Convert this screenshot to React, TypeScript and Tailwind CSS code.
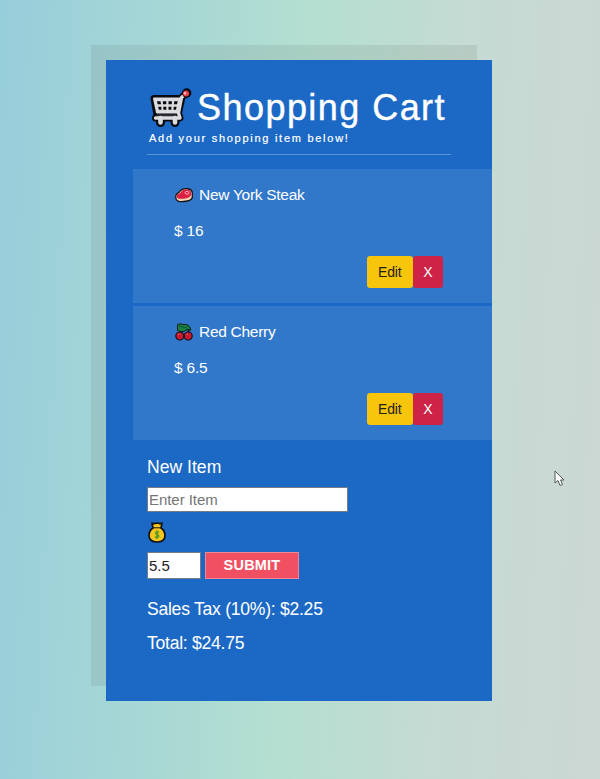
import React from "react";

function CartIcon() {
  return (
    <svg viewBox="0 0 42 40" className="h-10 w-[42px] shrink-0" strokeLinecap="round" strokeLinejoin="round" fill="none">
      <path d="M37 5L32 9L28.500 25L30 30H5.500M4 10.500H31.500L28 27H7Z" fill="#080b10" stroke="#080b10" strokeWidth="7" />
      <path d="M10.500 31V34.500M25 31V34.500" stroke="#080b10" strokeWidth="9" />
      <path d="M36 5.500L31.500 9.500L28.500 25L30 30H5.500" stroke="#dcdcdf" strokeWidth="3.400" />
      <path d="M4 10.500H31L28 24.500H7Z" fill="#dcdcdf" stroke="#dcdcdf" strokeWidth="2" />
      <path d="M7 13.300H10.500L11 16.300H7.700ZM12.800 13.300H16.300V16.300H13ZM18.500 13.300H22L21.700 16.300H18.500ZM24.200 13.300H27.700L27 16.300H24ZM8.200 18.800H11.200L11.500 21.800H8.800ZM13.200 18.800H16.300V21.800H13.500ZM18.500 18.800H21.500L21.300 21.800H18.500ZM23.800 18.800H26.600L26 21.800H23.400Z" fill="#080b10" />
      <path d="M7 27.200H26" stroke="#3a3c42" strokeWidth="1.200" />
      <path d="M10.500 30V34.500M25 30V34.500" stroke="#dcdcdf" strokeWidth="4.600" />
      <circle cx="36.700" cy="5" r="4.700" fill="#080b10" />
      <circle cx="36" cy="5.500" r="3" fill="#ee3f4f" />
      <circle cx="35" cy="5.300" r="1.200" fill="#ffc0c2" />
    </svg>
  );
}

function SteakIcon() {
  return (
    <svg viewBox="0 0 18 16" className="h-4 w-[18px]">
      <path d="M.8 9C.8 6 4 6.500 5.500 3.500C8 1 17.300 .5 17.300 6V10.500C16.500 14 12 14.300 9 14.500C4 15 .8 14 .8 11Z" fill="#efd2b4" stroke="#17121a" strokeWidth="1.300" />
      <path d="M1.700 9C2.500 6.700 5.500 7 6.800 4C9 2 16.300 1.500 16.300 6.500C16 11 11 11.500 7 11.800C4 12 1.500 11.500 1.700 9Z" fill="#db2143" />
      <ellipse cx="12" cy="5.800" rx="2" ry="1.400" fill="#db2143" stroke="#f6a8b4" strokeWidth="1" />
    </svg>
  );
}

function CherryIcon() {
  return (
    <svg viewBox="0 0 18 18" className="h-[18px] w-[18px]">
      <path d="M13 4C14 7 14 9 13 11M11 5C8 7 6 8 5 11" fill="none" stroke="#102019" strokeWidth="2" />
      <path d="M2.500 1.500L5 .8L8 1.500L11 1.500C14 2 15 4 16 7L12 6.500L9 8.500H5L2.500 7.500Z" fill="#188044" stroke="#102019" />
      <path d="M4 3L12 5" stroke="#0e5932" />
      <circle cx="4.800" cy="13" r="4" fill="#c9172f" stroke="#17121a" strokeWidth="1.200" />
      <circle cx="13.200" cy="13" r="4" fill="#c9172f" stroke="#17121a" strokeWidth="1.200" />
      <path d="M3 11.700L4.500 11M11.500 11.700L13 11" stroke="#f16b74" />
    </svg>
  );
}

function MoneyBagIcon() {
  return (
    <svg viewBox="0 0 18 21" className="h-[21px] w-[18px]">
      <path d="M4 1L6 1.700L9 1L12 1.700L14 1L13 6C16 8 17 10 17 13.500C17 17.500 14 20 9 20C4 20 1 17.500 1 13.500C1 10 2 8 5 6Z" fill="#f6c51b" stroke="#10131a" strokeWidth="1.700" strokeLinejoin="round" />
      <path d="M5 5.800H13" stroke="#10131a" />
      <path d="M11 10.500C8 9 6.500 11.500 9 12.500C12.500 13.500 10 16.500 7 15M9 8.500V17" fill="none" stroke="#5b9d26" strokeWidth="1.700" />
    </svg>
  );
}

const items = [
  { name: "New York Steak", price: "16", icon: <SteakIcon /> },
  { name: "Red Cherry", price: "6.5", icon: <CherryIcon /> },
];

export default function App() {
  return (
    <div className="relative h-[779px] w-[600px] overflow-hidden bg-[linear-gradient(93deg,#97cedb_0%,#b4dfd1_49%,#c5dbd3_73%,#ccd8d3_100%)] pt-[60px] pl-[106px] font-['Liberation_Sans',Arial,sans-serif] text-white">
      <main className="h-[641px] w-[386px] bg-[#1c69c5] shadow-[-15px_-15px_0_rgba(95,100,95,0.13)]">
        <header className="ml-[41px] h-[95px] w-[304px] border-b border-[#5b96d7] pt-7">
          <h1 className="flex h-10 items-center pl-[3px] text-[36px] leading-10 tracking-[1.450px] whitespace-nowrap [-webkit-text-stroke:0.4px_white]">
            <CartIcon />
            <span className="ml-[5px]">Shopping Cart</span>
          </h1>
          <p className="ml-0.5 text-[11px] leading-5 tracking-[1.730px] [-webkit-text-stroke:0.2px_white]">Add your shopping item below!</p>
        </header>

        <ul className="mt-3.5 ml-[27px] flex flex-col gap-[3px]">
          {items.map((item) => (
            <li key={item.name} className="h-[134px] bg-[#3177ca] pt-4 pl-[41px] text-[15.500px] leading-5 tracking-[-0.280px]">
              <div className="flex h-5 items-center">
                <span className="ml-px w-6">{item.icon}</span>
                <span>{item.name}</span>
              </div>
              <p className="mt-4 tracking-[-0.200px]">$ {item.price}</p>
              <div className="mt-[15px] ml-[193px] flex text-sm tracking-[-0.150px]">
                <button className="h-8 w-[45.500px] rounded-[3px] bg-[#f7c60c] text-[#252015]">Edit</button>
                <button className="h-8 w-[30.500px] rounded-[3px] bg-[#cd2346]">X</button>
              </div>
            </li>
          ))}
        </ul>

        <form className="mt-[15px] ml-[41px]" onSubmit={(e) => e.preventDefault()}>
          <label htmlFor="item" className="block h-6 text-[17.600px] leading-6">New Item</label>
          <input id="item" placeholder="Enter Item" className="mt-2 block h-[25px] w-[201px] border border-[#747d86] bg-white px-px text-[15px] tracking-[-0.050px] text-[#222] placeholder:text-[#757575]" />
          <div className="mt-2.5 ml-px h-[21px]"><MoneyBagIcon /></div>
          <div className="mt-[9px] flex gap-1">
            <input aria-label="Price" defaultValue="5.5" className="h-[27px] w-[54px] border border-[#747d86] bg-white px-px text-[15px] text-[#222]" />
            <button className="h-[27px] w-[94px] border border-[#f18796] bg-[#f15062] text-[14.500px] font-bold tracking-[0.200px]">SUBMIT</button>
          </div>
        </form>

        <section className="mt-[18px] ml-[41px] text-[17.600px] leading-6 tracking-[-0.270px]">
          <p>Sales Tax (10%): $2.25</p>
          <p className="mt-2.5">Total: $24.75</p>
        </section>
      </main>

      <svg viewBox="0 0 11 17" className="absolute top-[470px] left-[554px] h-[17px] w-[11px]">
        <path d="M1 1V13L4 10.500L6 15.500L8.500 14.500L6.500 10H10Z" fill="white" stroke="#53595b" />
      </svg>
    </div>
  );
}
